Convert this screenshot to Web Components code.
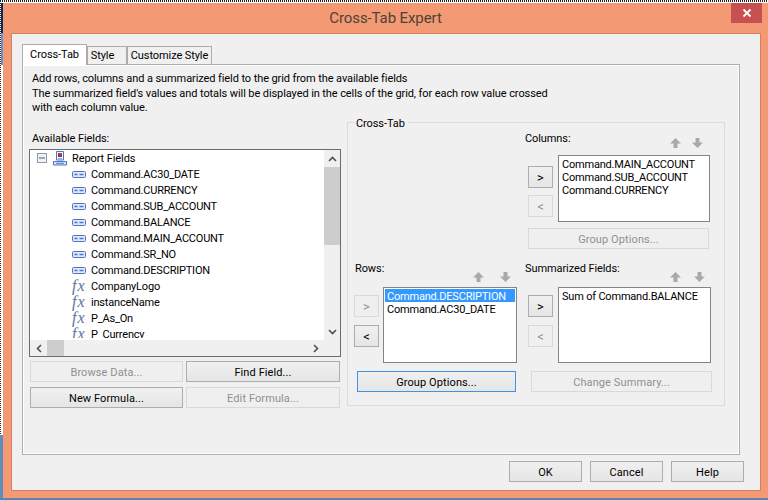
<!DOCTYPE html>
<html>
<head>
<meta charset="utf-8">
<title>Cross-Tab Expert</title>
<style>
    html, body{ margin: 0; padding: 0; overflow: hidden; }
    body{ font: 11px/15px Roboto, "Noto Sans", sans-serif; letter-spacing: -.09px; color: #000; }
</style>
</head>
<body>
<cte-desktop>
    <cte-window heading="Cross-Tab Expert">
        <cte-tabs>
            <div class="desc" slot="desc">Add rows, columns and a summarized field to the grid from the available fields<br>The summarized field's values and totals will be displayed in the cells of the grid, for each row value crossed<br>with each column value.</div>
            <cte-fields slot="left"></cte-fields>
            <cte-grid slot="right"></cte-grid>
        </cte-tabs>
    </cte-window>
</cte-desktop>

<script>
class CteDesktop extends HTMLElement{
    constructor(){
        super();
        const shadow = this.attachShadow({ mode: 'open' });
        shadow.innerHTML = `
        <style>
        :host{
            display: grid;
            width: 768px;
            height: 500px;
            grid-template-columns: 3px 765px;
            grid-template-rows: 3px 495px 2px;
            background: #5f8dbd;
        }
        .top{
            grid-column: 1 / 3;
            background: repeating-linear-gradient(90deg, #222 0 1px, #fff 1px 2px);
            border-bottom: 1px solid #fff;
            box-sizing: border-box;
        }
        .side{
            position: relative;
            background: linear-gradient(#0b2b5c 0 30px, #6e8cc6 30px 62px, #fff 62px 432px, #5f8dbd 432px);
        }
        .side::before{
            content: "";
            display: block;
            width: 1px;
            height: 432px;
            background: repeating-linear-gradient(#222 0 1px, #fff 1px 2px);
        }
        .bottom{ grid-column: 1 / 3; background: #5a83ad; }
        </style>
        <div class="top"></div>
        <div class="side"></div>
        <slot></slot>
        <div class="bottom"></div>
        `;
    }
}

class CteWindow extends HTMLElement{
    constructor(){
        super();
        const shadow = this.attachShadow({ mode: 'open' });
        shadow.innerHTML = `
        <style>
        :host{
            display: block;
            background: #f39a74;
            box-sizing: border-box;
            padding: 0 7px 7px 8px;
        }
        .title{
            height: 30px;
            margin: 0 -7px 0 -8px;
            display: grid;
            grid-template-columns: 1fr auto 1fr;
            align-items: start;
        }
        h1{
            margin: 0;
            grid-column: 2;
            font: 400 15px/30px Roboto, "Noto Sans", sans-serif;
            letter-spacing: -.1px;
            color: #4c4238;
        }
        .close{
            grid-column: 3;
            justify-self: end;
            width: 31px;
            height: 20px;
            margin-right: 6px;
            background: #c75050;
            display: flex;
            align-items: center;
            justify-content: center;
        }
        .client{
            box-sizing: border-box;
            width: 750px;
            height: 458px;
            border: 1px solid #d4805f;
            background: #f0f0f0;
            padding: 10px 0 0 10px;
        }
        .foot{
            display: flex;
            justify-content: flex-end;
            gap: 8px;
            margin: 6px 16px 0 0;
        }
        cte-button{ width: 73px; height: 21px; }
        </style>
        <div class="title">
            <h1 id="heading"></h1>
            <div class="close">
                <svg width="10" height="10" viewBox="0 0 10 10"><path d="M1.500 1.500l7 7M8.500 1.500l-7 7" stroke="#fff" stroke-width="1.800"/></svg>
            </div>
        </div>
        <div class="client">
            <slot></slot>
            <div class="foot">
                <cte-button>OK</cte-button>
                <cte-button>Cancel</cte-button>
                <cte-button>Help</cte-button>
            </div>
        </div>
        `;
    }
    connectedCallback(){
        this.shadowRoot.getElementById("heading").textContent = this.getAttribute("heading");
    }
}

class CteTabs extends HTMLElement{
    constructor(){
        super();
        const shadow = this.attachShadow({ mode: 'open' });
        shadow.innerHTML = `
        <style>
        :host{ display: block; width: 718px; }
        .strip{
            display: flex;
            align-items: flex-end;
            height: 20px;
            position: relative;
            z-index: 1;
        }
        .tab{
            box-sizing: border-box;
            height: 18px;
            border: 1px solid #adadad;
            border-bottom: 0;
            background: #f0f0f0;
            padding-top: 1px;
            text-align: center;
            line-height: 16px;
            white-space: nowrap;
        }
        .tab.on{
            height: 21px;
            margin-bottom: -1px;
            background: #fff;
            line-height: 17px;
        }
        .pane{
            box-sizing: border-box;
            height: 391px;
            border: 1px solid #adadad;
            box-shadow: inset 0 0 0 1px #fff;
            background: #f0f0f0;
            padding: 6px 0 0 6px;
            display: grid;
            grid-template-columns: 312px 378px;
            grid-template-rows: 44px auto;
            column-gap: 6px;
            align-content: start;
        }
        .desc{ grid-column: 1 / 3; padding: 1px 0 0 3px; }
        ::slotted(.desc){ line-height: 14.5px; white-space: nowrap; }
        </style>
        <div class="strip">
            <div class="tab on" style="width: 65px">Cross-Tab</div>
            <div class="tab" style="width: 40px; padding-right: 9px">Style</div>
            <div class="tab" style="width: 85px">Customize Style</div>
        </div>
        <div class="pane">
            <div class="desc"><slot name="desc"></slot></div>
            <slot name="left"></slot>
            <slot name="right"></slot>
        </div>
        `;
    }
}

class CteButton extends HTMLElement{
    constructor(){
        super();
        const shadow = this.attachShadow({ mode: 'open' });
        shadow.innerHTML = `
        <style>
        :host{
            display: flex;
            box-sizing: border-box;
            align-items: center;
            justify-content: center;
            padding-top: 1px;
            border: 1px solid #adadad;
            background: linear-gradient(#f0f0f0, #e5e5e5);
            white-space: nowrap;
            letter-spacing: .1px;
        }
        :host([disabled]){
            border-color: #d9d9d9;
            background: #efefef;
            color: #8f8f8f;
        }
        :host([focused]){ border-color: #3e93e6; }
        </style>
        <slot></slot>
        `;
    }
}

class CteTreeRow extends HTMLElement{
    constructor(){
        super();
        const shadow = this.attachShadow({ mode: 'open' });
        shadow.innerHTML = `
        <style>
        :host{
            display: flex;
            align-items: center;
            height: 16px;
            padding-left: 42px;
            white-space: nowrap;
            letter-spacing: -.2px;
        }
        :host([root]){ padding-left: 7px; letter-spacing: -.09px; }
        .ico{ width: 14px; height: 14px; margin-right: 5px; flex: none; display: flex; align-items: center; }
        .fx{
            font: italic 400 16px/14px "Liberation Serif", serif;
            color: #5a7299;
            letter-spacing: 1px;
        }
        svg{ display: block; }
        </style>
        <span class="ico" id="ico"></span>
        <slot></slot>
        `;
    }
    connectedCallback(){
        const ico = this.shadowRoot.getElementById("ico");
        const kind = this.getAttribute("kind");
        if(kind == "field"){
            ico.innerHTML = `<svg width="14" height="7" viewBox="0 0 14 7"><rect x=".5" y=".5" width="13" height="6" rx="1" fill="#dfe8f8" stroke="#4f76c4"/><path d="M2.500 3.500h3M7.500 3.500h4" stroke="#4f76c4" stroke-width="1.400"/></svg>`;
        }else if(kind == "formula"){
            ico.innerHTML = `<span class="fx">fx</span>`;
        }else{
            ico.style.width = "auto";
            ico.innerHTML = `<svg width="10" height="10" viewBox="0 0 10 10" style="margin-right:6px"><rect x=".5" y=".5" width="9" height="9" fill="#eef1f5" stroke="#8f9aa8"/><path d="M2 5h6" stroke="#47607f"/></svg>
            <svg width="14" height="15" viewBox="0 0 14 15"><path d="M3.500.5h7V9h-7z" fill="#f4f7fd" stroke="#4f76c4"/><rect x="5" y="2" width="4" height="4" fill="#d9202a"/><path d="M7 2h2v2H7z" fill="#1f9a3a"/><path d="M5 5h2v1H5z" fill="#2345c8"/><path d="M5 7.500h4" stroke="#8fa6d6"/><path d="M.5 10.500h13V14H.5z" fill="#dbe6fa" stroke="#4f76c4"/><path d="M3 12.300h8" stroke="#4f76c4"/></svg>`;
        }
    }
}

class CteTree extends HTMLElement{
    constructor(){
        super();
        const shadow = this.attachShadow({ mode: 'open' });
        shadow.innerHTML = `
        <style>
        :host{
            display: grid;
            box-sizing: border-box;
            width: 312px;
            height: 208px;
            border: 1px solid #6c6c6c;
            grid-template-columns: 294px 16px;
            grid-template-rows: 190px 16px;
            background: #f0f0f0;
        }
        .view{ background: #fff; }
        .rows{ height: 188px; overflow: hidden; }
        .vbar{ display: grid; grid-template-rows: 17px 78px 1fr 17px; }
        .hbar{ display: grid; grid-template-columns: 17px 17px 1fr 17px; }
        .thumb{ background: #cdcdcd; }
        .arr{ display: flex; align-items: center; justify-content: center; }
        svg{ display: block; }
        path{ fill: none; stroke: #505050; stroke-width: 1.600; }
        </style>
        <div class="view"><div class="rows"><slot></slot></div></div>
        <div class="vbar">
            <div class="arr"><svg width="9" height="6" viewBox="0 0 9 6"><path d="M1 5l3.500-3.500L8 5"/></svg></div>
            <div class="thumb"></div>
            <div></div>
            <div class="arr"><svg width="9" height="6" viewBox="0 0 9 6"><path d="M1 1l3.500 3.500L8 1"/></svg></div>
        </div>
        <div class="hbar">
            <div class="arr"><svg width="6" height="9" viewBox="0 0 6 9"><path d="M5 1L1.500 4.500 5 8"/></svg></div>
            <div class="thumb"></div>
            <div></div>
            <div class="arr"><svg width="6" height="9" viewBox="0 0 6 9"><path d="M1 1l3.500 3.500L1 8"/></svg></div>
        </div>
        <div></div>
        `;
    }
}

class CteFields extends HTMLElement{
    constructor(){
        super();
        const shadow = this.attachShadow({ mode: 'open' });
        shadow.innerHTML = `
        <style>
        :host{ display: block; padding-top: 16px; }
        .label{ height: 18px; padding-left: 3px; }
        .btns{
            display: grid;
            grid-template-columns: 153px 154px;
            grid-auto-rows: 21px;
            gap: 5px 3px;
            margin: 4px 0 0 1px;
        }
        </style>
        <div class="label">Available Fields:</div>
        <cte-tree>
            <cte-tree-row root>Report Fields</cte-tree-row>
            <cte-tree-row kind="field">Command.AC30_DATE</cte-tree-row>
            <cte-tree-row kind="field">Command.CURRENCY</cte-tree-row>
            <cte-tree-row kind="field">Command.SUB_ACCOUNT</cte-tree-row>
            <cte-tree-row kind="field">Command.BALANCE</cte-tree-row>
            <cte-tree-row kind="field">Command.MAIN_ACCOUNT</cte-tree-row>
            <cte-tree-row kind="field">Command.SR_NO</cte-tree-row>
            <cte-tree-row kind="field">Command.DESCRIPTION</cte-tree-row>
            <cte-tree-row kind="formula">CompanyLogo</cte-tree-row>
            <cte-tree-row kind="formula">instanceName</cte-tree-row>
            <cte-tree-row kind="formula">P_As_On</cte-tree-row>
            <cte-tree-row kind="formula">P_Currency</cte-tree-row>
        </cte-tree>
        <div class="btns">
            <cte-button disabled>Browse Data...</cte-button>
            <cte-button>Find Field...</cte-button>
            <cte-button>New Formula...</cte-button>
            <cte-button disabled>Edit Formula...</cte-button>
        </div>
        `;
    }
}

class CteMoveArrow extends HTMLElement{
    constructor(){
        super();
        const shadow = this.attachShadow({ mode: 'open' });
        shadow.innerHTML = `
        <style>
        :host{ display: block; width: 11px; height: 10px; }
        svg{ display: block; }
        </style>
        <svg width="11" height="10" viewBox="0 0 11 10"><path id="shape"/></svg>
        `;
    }
    connectedCallback(){
        const shape = this.shadowRoot.getElementById("shape");
        shape.setAttribute("d", this.hasAttribute("down") ? "M3.500 0h4v4.500H11L5.500 10 0 4.500h3.500z" : "M3.500 10h4V5.500H11L5.500 0 0 5.500h3.500z");
        shape.setAttribute("fill", this.hasAttribute("active") ? "#6d9ee3" : "#a9a9a9");
    }
}

class CteListPanel extends HTMLElement{
    constructor(){
        super();
        const shadow = this.attachShadow({ mode: 'open' });
        shadow.innerHTML = `
        <style>
        :host{ display: block; width: var(--panel-w); }
        .head{
            display: flex;
            box-sizing: border-box;
            height: var(--head-h);
            padding-left: var(--label-x, 0);
            padding-right: var(--arrow-r);
        }
        .head span{ flex: 1; }
        .arrows{
            display: flex;
            gap: var(--arrow-gap);
            margin-top: var(--arrow-top);
        }
        .body{
            display: flex;
            gap: var(--body-gap, 5px);
            padding-left: var(--body-x, 0);
        }
        .moves{
            display: flex;
            flex-direction: column;
            gap: var(--move-gap, 8px);
            padding-top: var(--move-top, 8px);
        }
        cte-button.move{ width: 25px; height: 22px; font-size: 13px; }
        .list{
            box-sizing: border-box;
            width: var(--list-w);
            height: var(--list-h);
            border: 1px solid #7f858c;
            background: #fff;
            padding: 1px;
            white-space: nowrap;
            letter-spacing: -.2px;
        }
        .foot{
            margin-top: var(--foot-top);
            padding-left: var(--foot-x, 0);
        }
        ::slotted(cte-button){ width: var(--foot-w); height: 21px; }
        ::slotted(.item){ display: block; box-sizing: border-box; height: 13px; line-height: 13px; padding: 1px 0 0 2px; }
        ::slotted(.sel){ background: #3399ff; color: #fff; }
        </style>
        <div class="head">
            <span id="label"></span>
            <div class="arrows">
                <cte-move-arrow></cte-move-arrow>
                <cte-move-arrow down id="down"></cte-move-arrow>
            </div>
        </div>
        <div class="body">
            <div class="moves">
                <cte-button class="move" id="add">&gt;</cte-button>
                <cte-button class="move" id="rem">&lt;</cte-button>
            </div>
            <div class="list"><slot></slot></div>
        </div>
        <div class="foot"><slot name="action"></slot></div>
        `;
    }
    connectedCallback(){
        const root = this.shadowRoot;
        root.getElementById("label").textContent = this.getAttribute("label");
        if(this.getAttribute("off") == "add") root.getElementById("add").setAttribute("disabled", "");
        if(this.getAttribute("off") == "rem") root.getElementById("rem").setAttribute("disabled", "");
        if(this.hasAttribute("sel-down")) root.getElementById("down").setAttribute("active", "");
    }
}

class CteGrid extends HTMLElement{
    constructor(){
        super();
        const shadow = this.attachShadow({ mode: 'open' });
        shadow.innerHTML = `
        <style>
        :host{ display: block; }
        fieldset{
            box-sizing: border-box;
            margin: -1px 0 0;
            padding: 0;
            height: 292px;
            border: 1px solid #dcdcdc;
            display: grid;
            grid-template-columns: 177px 1fr;
            grid-template-rows: 130px auto;
            align-content: start;
        }
        legend{
            margin-left: 7px;
            padding: 2px 3px 0 1px;
            line-height: 15px;
        }
        #cols{
            grid-column: 2;
            --panel-w: 185px;
            --head-h: 24px; --arrow-top: 7px; --arrow-r: 7px; --arrow-gap: 11px;
            --body-x: 3px; --move-top: 11px; --move-gap: 7px;
            --list-w: 152px; --list-h: 67px;
            --foot-top: 6px; --foot-x: 3px; --foot-w: 181px;
        }
        #rows{
            grid-column: 1;
            margin-left: 6px;
            --panel-w: 163px;
            --head-h: 26px; --label-x: 1px; --arrow-top: 11px; --arrow-r: 6px; --arrow-gap: 16px;
            --body-gap: 4px;
            --list-w: 134px; --list-h: 76px;
            --foot-top: 8px; --foot-x: 3px; --foot-w: 159px;
        }
        #sums{
            grid-column: 2;
            --panel-w: 186px;
            --head-h: 26px; --arrow-top: 11px; --arrow-r: 6px; --arrow-gap: 13px;
            --body-x: 3px;
            --list-w: 153px; --list-h: 76px;
            --foot-top: 8px; --foot-x: 6px; --foot-w: 181px;
        }
        </style>
        <fieldset>
            <legend>Cross-Tab</legend>
            <cte-list-panel id="cols" label="Columns:" off="rem">
                <span class="item">Command.MAIN_ACCOUNT</span>
                <span class="item">Command.SUB_ACCOUNT</span>
                <span class="item">Command.CURRENCY</span>
                <cte-button slot="action" disabled>Group Options...</cte-button>
            </cte-list-panel>
            <cte-list-panel id="rows" label="Rows:" off="add" sel-down>
                <span class="item sel">Command.DESCRIPTION</span>
                <span class="item">Command.AC30_DATE</span>
                <cte-button slot="action" focused>Group Options...</cte-button>
            </cte-list-panel>
            <cte-list-panel id="sums" label="Summarized Fields:" off="rem">
                <span class="item">Sum of Command.BALANCE</span>
                <cte-button slot="action" disabled>Change Summary...</cte-button>
            </cte-list-panel>
        </fieldset>
        `;
    }
}

customElements.define("cte-desktop", CteDesktop);
customElements.define("cte-window", CteWindow);
customElements.define("cte-tabs", CteTabs);
customElements.define("cte-button", CteButton);
customElements.define("cte-tree-row", CteTreeRow);
customElements.define("cte-tree", CteTree);
customElements.define("cte-fields", CteFields);
customElements.define("cte-move-arrow", CteMoveArrow);
customElements.define("cte-list-panel", CteListPanel);
customElements.define("cte-grid", CteGrid);
</script>
</body>
</html>
